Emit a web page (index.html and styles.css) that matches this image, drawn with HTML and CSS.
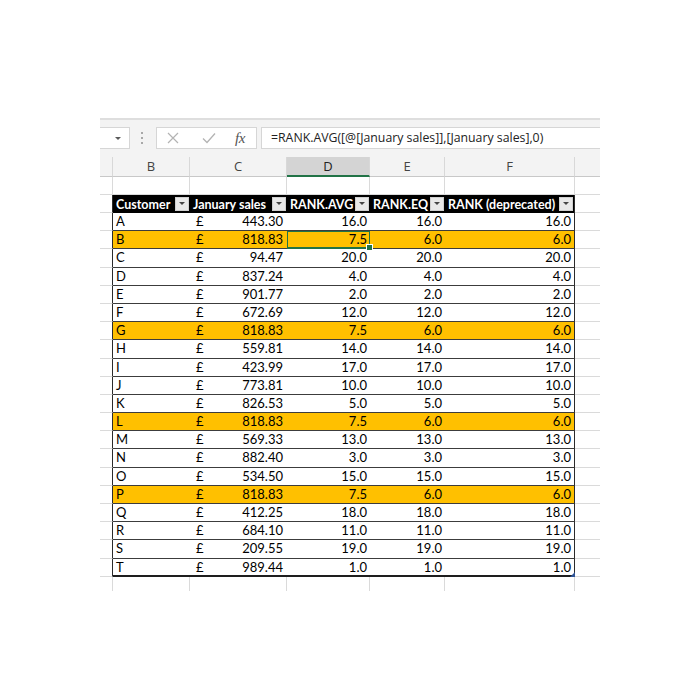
FILE: index.html
```html
<!DOCTYPE html>
<html>
<head>
<meta charset="utf-8">
<link rel="stylesheet" href="styles.css">
</head>
<body>
<div class="sheet">
  <div class="toolbar">
    <div class="namebox"><span class="tri"></span></div>
    <div class="dots"><i></i><i></i><i></i></div>
    <div class="fxbox">
      <svg class="ico x" width="12" height="12" viewBox="0 0 12 12"><path d="M1 1L11 11M11 1L1 11" stroke="#b3b3b3" stroke-width="1.2" fill="none"/></svg>
      <svg class="ico chk" width="14" height="12" viewBox="0 0 14 12"><path d="M1 6.5L5 10.5L13 1.5" stroke="#b3b3b3" stroke-width="1.3" fill="none"/></svg>
      <span class="fx">fx</span>
    </div>
    <div class="formula">=RANK.AVG([@[January sales]],[January sales],0)</div>
  </div>

  <div class="row colhead">
    <div class="stub"></div>
    <div class="ch">B</div>
    <div class="ch">C</div>
    <div class="ch sel">D</div>
    <div class="ch">E</div>
    <div class="ch">F</div>
    <div class="stub last"></div>
  </div>

  <div class="row empty">
    <div class="stub"></div><div class="g"></div><div class="g"></div><div class="g"></div><div class="g"></div><div class="g"></div><div class="stub last"></div>
  </div>

  <div class="row thead">
    <div class="stub tl"></div>
    <div class="h"><span>Customer</span><b class="btn"></b></div>
    <div class="h"><span>January sales</span><b class="btn"></b></div>
    <div class="h"><span>RANK.AVG</span><b class="btn"></b></div>
    <div class="h"><span>RANK.EQ</span><b class="btn"></b></div>
    <div class="h fcol"><span>RANK (deprecated)</span><b class="btn"></b></div>
    <div class="stub last"></div>
  </div>

  <div class="row data"><div class="stub tl"></div><div class="c">A</div><div class="c cur"><span>£</span><span>443.30</span></div><div class="c num">16.0</div><div class="c num">16.0</div><div class="c num fcol">16.0</div><div class="stub last"></div></div>
  <div class="row data hl"><div class="stub tl"></div><div class="c">B</div><div class="c cur"><span>£</span><span>818.83</span></div><div class="c num active">7.5</div><div class="c num">6.0</div><div class="c num fcol">6.0</div><div class="stub last"></div></div>
  <div class="row data"><div class="stub tl"></div><div class="c">C</div><div class="c cur"><span>£</span><span>94.47</span></div><div class="c num">20.0</div><div class="c num">20.0</div><div class="c num fcol">20.0</div><div class="stub last"></div></div>
  <div class="row data"><div class="stub tl"></div><div class="c">D</div><div class="c cur"><span>£</span><span>837.24</span></div><div class="c num">4.0</div><div class="c num">4.0</div><div class="c num fcol">4.0</div><div class="stub last"></div></div>
  <div class="row data"><div class="stub tl"></div><div class="c">E</div><div class="c cur"><span>£</span><span>901.77</span></div><div class="c num">2.0</div><div class="c num">2.0</div><div class="c num fcol">2.0</div><div class="stub last"></div></div>
  <div class="row data"><div class="stub tl"></div><div class="c">F</div><div class="c cur"><span>£</span><span>672.69</span></div><div class="c num">12.0</div><div class="c num">12.0</div><div class="c num fcol">12.0</div><div class="stub last"></div></div>
  <div class="row data hl"><div class="stub tl"></div><div class="c">G</div><div class="c cur"><span>£</span><span>818.83</span></div><div class="c num">7.5</div><div class="c num">6.0</div><div class="c num fcol">6.0</div><div class="stub last"></div></div>
  <div class="row data"><div class="stub tl"></div><div class="c">H</div><div class="c cur"><span>£</span><span>559.81</span></div><div class="c num">14.0</div><div class="c num">14.0</div><div class="c num fcol">14.0</div><div class="stub last"></div></div>
  <div class="row data"><div class="stub tl"></div><div class="c">I</div><div class="c cur"><span>£</span><span>423.99</span></div><div class="c num">17.0</div><div class="c num">17.0</div><div class="c num fcol">17.0</div><div class="stub last"></div></div>
  <div class="row data"><div class="stub tl"></div><div class="c">J</div><div class="c cur"><span>£</span><span>773.81</span></div><div class="c num">10.0</div><div class="c num">10.0</div><div class="c num fcol">10.0</div><div class="stub last"></div></div>
  <div class="row data"><div class="stub tl"></div><div class="c">K</div><div class="c cur"><span>£</span><span>826.53</span></div><div class="c num">5.0</div><div class="c num">5.0</div><div class="c num fcol">5.0</div><div class="stub last"></div></div>
  <div class="row data hl"><div class="stub tl"></div><div class="c">L</div><div class="c cur"><span>£</span><span>818.83</span></div><div class="c num">7.5</div><div class="c num">6.0</div><div class="c num fcol">6.0</div><div class="stub last"></div></div>
  <div class="row data"><div class="stub tl"></div><div class="c">M</div><div class="c cur"><span>£</span><span>569.33</span></div><div class="c num">13.0</div><div class="c num">13.0</div><div class="c num fcol">13.0</div><div class="stub last"></div></div>
  <div class="row data"><div class="stub tl"></div><div class="c">N</div><div class="c cur"><span>£</span><span>882.40</span></div><div class="c num">3.0</div><div class="c num">3.0</div><div class="c num fcol">3.0</div><div class="stub last"></div></div>
  <div class="row data"><div class="stub tl"></div><div class="c">O</div><div class="c cur"><span>£</span><span>534.50</span></div><div class="c num">15.0</div><div class="c num">15.0</div><div class="c num fcol">15.0</div><div class="stub last"></div></div>
  <div class="row data hl"><div class="stub tl"></div><div class="c">P</div><div class="c cur"><span>£</span><span>818.83</span></div><div class="c num">7.5</div><div class="c num">6.0</div><div class="c num fcol">6.0</div><div class="stub last"></div></div>
  <div class="row data"><div class="stub tl"></div><div class="c">Q</div><div class="c cur"><span>£</span><span>412.25</span></div><div class="c num">18.0</div><div class="c num">18.0</div><div class="c num fcol">18.0</div><div class="stub last"></div></div>
  <div class="row data"><div class="stub tl"></div><div class="c">R</div><div class="c cur"><span>£</span><span>684.10</span></div><div class="c num">11.0</div><div class="c num">11.0</div><div class="c num fcol">11.0</div><div class="stub last"></div></div>
  <div class="row data"><div class="stub tl"></div><div class="c">S</div><div class="c cur"><span>£</span><span>209.55</span></div><div class="c num">19.0</div><div class="c num">19.0</div><div class="c num fcol">19.0</div><div class="stub last"></div></div>
  <div class="row data lastrow"><div class="stub tl"></div><div class="c">T</div><div class="c cur"><span>£</span><span>989.44</span></div><div class="c num">1.0</div><div class="c num">1.0</div><div class="c num fcol corner">1.0</div><div class="stub last"></div></div>

  <div class="row tail">
    <div class="stub"></div><div class="g"></div><div class="g"></div><div class="g"></div><div class="g"></div><div class="g"></div><div class="stub last"></div>
  </div>
</div>
</body>
</html>
```

FILE: styles.css
```css
* { box-sizing: border-box; }
html, body { margin: 0; padding: 0; background: #fff; }

.sheet {
  width: 500px;
  margin: 118px 0 0 100px;
  font-family: "Lato", "Liberation Sans", sans-serif;
  color: #000;
}

/* ---------- formula bar ---------- */
.toolbar {
  height: 39px;
  background: #f3f3f3;
  border-top: 2px solid #dedede;
  padding-top: 7px;
  display: flex;
  align-items: flex-start;
}
.namebox {
  width: 30px;
  height: 22px;
  background: #fff;
  border: 1px solid #d6d6d6;
  border-left: none;
  display: flex;
  align-items: center;
  justify-content: flex-end;
  padding-right: 8px;
}
.tri {
  width: 0; height: 0;
  border-left: 3px solid transparent;
  border-right: 3px solid transparent;
  border-top: 3px solid #5a5a5a;
}
.dots {
  margin-left: 11px;
  margin-top: 5px;
  display: flex;
  flex-direction: column;
  gap: 3px;
}
.dots i {
  display: block;
  width: 2px; height: 2px;
  background: #a8a8a8;
}
.fxbox {
  margin-left: 13px;
  width: 101px;
  height: 22px;
  background: #fff;
  border: 1px solid #d6d6d6;
  display: flex;
  align-items: center;
  padding-left: 10px;
}
.ico.chk { margin-left: 23px; }
.fx {
  margin-left: 19px;
  font-family: "Liberation Serif", serif;
  font-style: italic;
  font-size: 15px;
  color: #555;
  letter-spacing: -0.5px;
}
.formula {
  margin-left: 4px;
  flex: 1;
  height: 22px;
  background: #fff;
  border: 1px solid #d6d6d6;
  border-right: none;
  padding-left: 9px;
  font-family: "Open Sans", "Noto Sans", sans-serif;
  font-size: 12.3px;
  line-height: 20px;
  color: #222;
  white-space: nowrap;
}

/* ---------- grid rows ---------- */
.row {
  display: grid;
  grid-template-columns: 13px 77px 97px 83px 75px 130px 25px;
}
.stub {
  border-right: 1px solid #dadada;
  border-bottom: 1px solid #dadada;
}
.stub.last { border-right: none; }
.stub.tl { border-right: 1px solid #2b2b2b; }

.colhead {
  height: 20px;
  background: #f3f3f3;
}
.colhead .stub, .colhead .ch {
  border-bottom: 1px solid #c8c8c8;
  border-right: 1px solid #d8d8d8;
}
.colhead .stub.last { border-right: none; }
.ch {
  font-family: "Open Sans", "Noto Sans", sans-serif;
  font-size: 13px;
  color: #444;
  text-align: center;
  line-height: 18px;
}
.ch.sel {
  background: #d4d4d4;
  color: #222;
  border-bottom: 2px solid #217346;
}

.empty { height: 18px; }
.g {
  border-right: 1px solid #dadada;
  border-bottom: 1px solid #dadada;
}

/* table header */
.thead { height: 18px; }
.h {
  background: #000;
  color: #fff;
  font-weight: 700;
  font-size: 12.5px;
  display: flex;
  align-items: center;
  justify-content: space-between;
  padding-left: 3px;
  padding-right: 1px;
  white-space: nowrap;
}
.btn {
  width: 14px;
  height: 14px;
  background: #e8e8e8;
  border: 1px solid #cfcfcf;
  display: flex;
  align-items: center;
  justify-content: center;
}
.btn::after {
  content: "";
  width: 0; height: 0;
  border-left: 3px solid transparent;
  border-right: 3px solid transparent;
  border-top: 3px solid #444;
  margin-top: -2px;
}

/* data rows */
.data { height: 18.2px; }
.c {
  font-size: 13px;
  line-height: 17px;
  padding: 0 3px;
  border-bottom: 1px solid #3c3c3c;
  white-space: nowrap;
}
.fcol { border-right: 1px solid #2b2b2b; }
.num { text-align: right; }
.cur {
  display: flex;
  justify-content: space-between;
  padding-left: 6px;
  padding-right: 4px;
}
.hl .c { background: #ffc000; }
.lastrow .c { border-bottom: 2px solid #1e1e1e; line-height: 16px; }

.active {
  position: relative;
  box-shadow: inset 0 0 0 1px #217346;
  border-bottom-color: #217346;
}
.active::after {
  content: "";
  position: absolute;
  right: -3px;
  bottom: -3px;
  width: 5px;
  height: 5px;
  background: #217346;
  border: 1px solid #fff;
}
.corner { position: relative; }
.corner::after {
  content: "";
  position: absolute;
  right: -1px;
  bottom: -2px;
  width: 0; height: 0;
  border-left: 5px solid transparent;
  border-bottom: 5px solid #2f5597;
}

.tail { height: 14px; }
.tail .stub, .tail .g { border-bottom: none; }
```
